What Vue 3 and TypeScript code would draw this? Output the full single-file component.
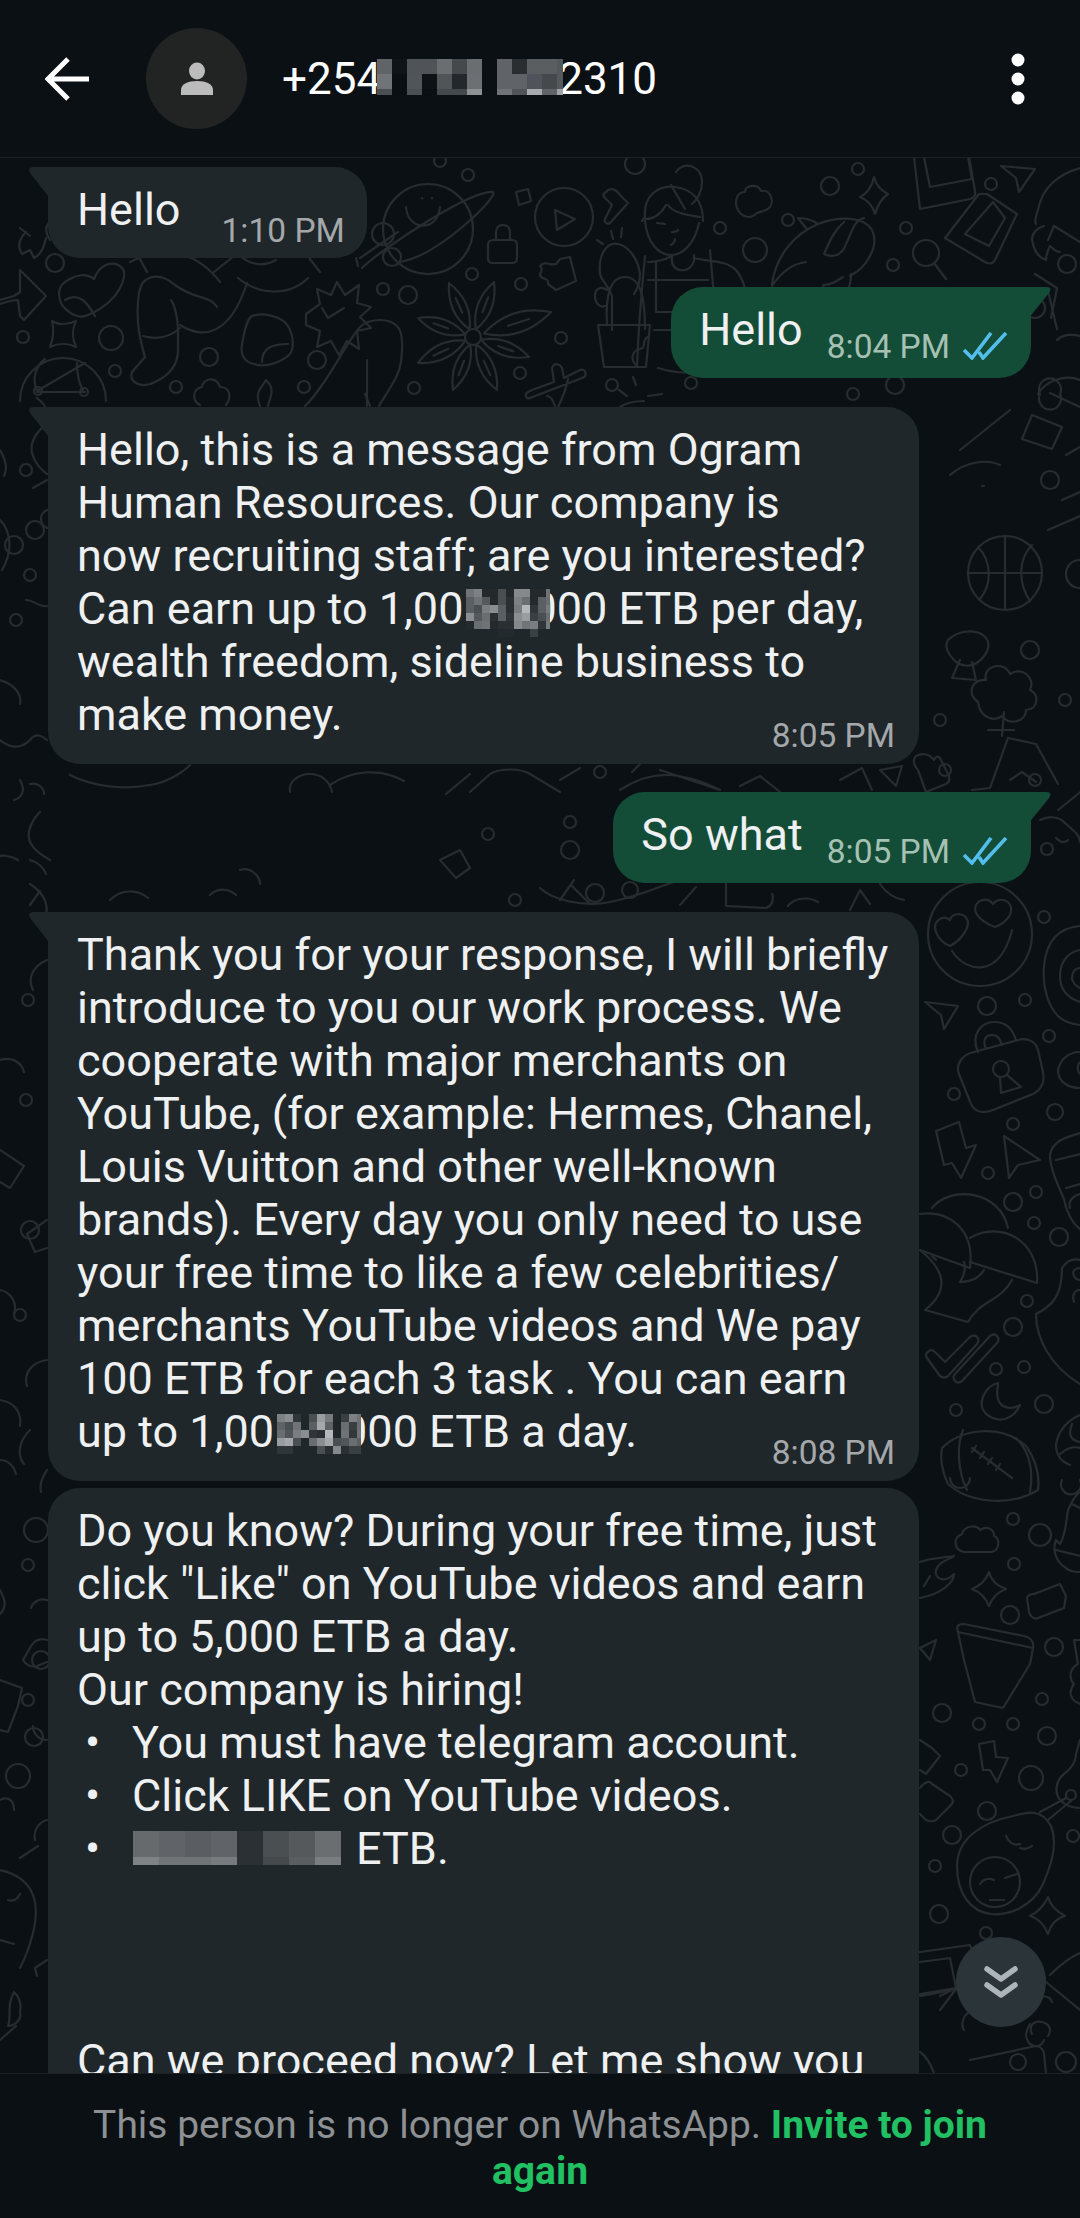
<script setup lang="ts">
interface Mosaic {
  cols: number
  cell: number
  w: number
  h: number
  rise: number
  ml: number
  mr: number
  cells: string[]
}

interface Part {
  text?: string
  mosaic?: Mosaic
}

interface Line {
  parts: Part[]
  bullet?: boolean
}

interface Bubble {
  lines: Line[]
  time: string
}

function cellsOf(rows: string[]): string[] {
  return rows.join(' ').split(' ').map((c) => (c === '-' ? 'transparent' : '#' + c))
}

const titleMosaic: Mosaic = {
  cols: 13,
  cell: 15,
  w: 186,
  h: 36,
  rise: 35,
  ml: -4,
  mr: -5,
  cells: cellsOf([
    '606468 0f1417 505458 505458 6a6e70 45494c 6a6e70 - 606468 2a2e30 5a5e60 5a5e60 55585a',
    '707476 0a0f13 50555a 0d1216 505558 22282b 6c7072 - 606468 606468 50545a 45494c 55585c',
    '4a4f52 0a0f13 4a4f52 0a0f13 44494c 44494c 8f9294 - 707476 505458 a8abad 606468 a0a3a5'
  ])
}

const salaryA: Mosaic = {
  cols: 11,
  cell: 8,
  w: 84,
  h: 48,
  rise: 35,
  ml: 3,
  mr: -19,
  cells: cellsOf([
    '6f7375 7d8183 24292c 24292c 4a4f52 24292c 85898b 85898b 24292c 24292c 6f7375',
    '5a5f62 6f7375 55595c 24292c 4a4f52 2a2f32 7d8183 6a6e70 24292c 5a5f62 6a6e70',
    '5a5f62 4a4f52 7a7e80 8a8e90 5a5f62 2a2f32 777b7d b5b8ba 30353a 5a5f62 777b7d',
    '8a8e90 55595c 6a6e70 2a2f32 5a5f62 30353a 8a8e90 9a9da0 3a3f42 4a4f52 6a6e70',
    '24292c 6a6e70 6f7375 24292c 2a2f32 2a2f32 85898b 707476 7a7e80 30353a 777b7d',
    '- - - - 23292c 23292c - - 3a4044 - -'
  ])
}

const salaryB: Mosaic = {
  cols: 11,
  cell: 8,
  w: 84,
  h: 40,
  rise: 33,
  ml: 3,
  mr: -19,
  cells: cellsOf([
    '7d8183 8a8e90 30353a 1f272a 4a4f52 9a9da0 777b7d 1f272a 3a3f42 7d8183 6f7375',
    '5f6366 4a4f52 6f7375 1f272a 5a5f62 a5a8aa 5f6366 1f272a 6a6e70 3a3f42 6a6e70',
    '6a6e70 50555a 7a7e80 8a8e90 30353a 2a2f32 b5b8ba 1f272a 6f7375 33383b 6f7375',
    '9a9da0 a5a8aa 4a4f52 1f272a 6a6e70 8a8e90 a5a8aa 4a4f52 50555a 6a6e70 5a5f62',
    '30353a 30353a 1f272a 1f272a 1f272a 4a4f52 2a2f32 85898b 2a2f32 3a3f42 3a3f42'
  ])
}

const wageLine: Mosaic = {
  cols: 8,
  cell: 26,
  w: 210,
  h: 34,
  rise: 33,
  ml: 1,
  mr: 13,
  cells: cellsOf([
    '666a6d 606468 5a5e62 606468 2a3033 4a4f52 55595c 6a6e70',
    '7f8385 707476 707476 777b7d 2a3033 45494c 5a5e60 7a7e80'
  ])
}

function plain(text: string): Line {
  return { parts: [{ text }] }
}

const longFirst: Bubble = {
  time: '8:05 PM',
  lines: [
    plain('Hello, this is a message from Ogram'),
    plain('Human Resources. Our company is'),
    plain('now recruiting staff; are you interested?'),
    { parts: [{ text: 'Can earn up to 1,00' }, { mosaic: salaryA }, { text: '000 ETB per day,' }] },
    plain('wealth freedom, sideline business to'),
    plain('make money.')
  ]
}

const longSecond: Bubble = {
  time: '8:08 PM',
  lines: [
    plain('Thank you for your response, I will briefly'),
    plain('introduce to you our work process. We'),
    plain('cooperate with major merchants on'),
    plain('YouTube, (for example: Hermes, Chanel,'),
    plain('Louis Vuitton and other well-known'),
    plain('brands). Every day you only need to use'),
    plain('your free time to like a few celebrities/'),
    plain('merchants YouTube videos and We pay'),
    plain('100 ETB for each 3 task . You can earn'),
    { parts: [{ text: 'up to 1,00' }, { mosaic: salaryB }, { text: '000 ETB a day.' }] }
  ]
}

const thirdLines: Line[] = [
  plain('Do you know? During your free time, just'),
  plain('click "Like" on YouTube videos and earn'),
  plain('up to 5,000 ETB a day.'),
  plain('Our company is hiring!'),
  { parts: [{ text: 'You must have telegram account.' }], bullet: true },
  { parts: [{ text: 'Click LIKE on YouTube videos.' }], bullet: true },
  { parts: [{ mosaic: wageLine }, { text: 'ETB.' }], bullet: true },
  plain('\u00a0'),
  plain('\u00a0'),
  plain('\u00a0'),
  plain('Can we proceed now? Let me show you')
]

function boxOf(m: Mosaic) {
  return { width: `${m.w}px`, marginLeft: `${m.ml}px`, marginRight: `${m.mr}px` }
}

function gridOf(m: Mosaic) {
  return {
    gridTemplateColumns: `repeat(${m.cols}, ${m.cell}px)`,
    gridAutoRows: `${m.cell}px`,
    width: `${m.w}px`,
    height: `${m.h}px`,
    top: `${-m.rise}px`
  }
}

function petal(tx: number, ty: number): string {
  const cx = 473
  const cy = 337
  const dx = tx - cx
  const dy = ty - cy
  const mx = cx + dx * 0.55
  const my = cy + dy * 0.55
  const nx = -dy * 0.24
  const ny = dx * 0.24
  const a = `${cx + dx * 0.14} ${cy + dy * 0.14}`
  const vein = `M${cx + dx * 0.45} ${cy + dy * 0.45} L${cx + dx * 0.72} ${cy + dy * 0.72}`
  return `M${a} Q${mx + nx} ${my + ny} ${tx} ${ty} Q${mx - nx} ${my - ny} ${a} ${vein}`
}

const doodlePaths: string[] = [
  // planet, ringed
  'M406 207 C408 232 438 232 440 207 M362 268 C380 250 470 190 493 192 C500 195 440 255 400 262',
  'M422 198 v.5 M432 198 v.5',
  // play, lock, small shapes
  'M555 210 L575 219 L557 230 Z',
  'M493 240 h19 q5 0 5 5 v13 q0 5 -5 5 h-19 q-5 0 -5 -5 v-13 q0 -5 5 -5 z M496 240 v-7 q0 -8 7 -8 q7 0 7 8 v7',
  'M516 192 l12 -3 l3 12 l-12 4 z',
  'M540 266 c5 -6 10 0 16 -2 l4 -5 l10 -2 l6 24 l-20 9 l-8 -6 c2 -7 -8 -4 -8 -9 c0 -4 4 -5 0 -9 z',
  'M606 192 c4 -5 10 -3 14 3 l8 8 l-18 20 c-3 2 -6 -1 -5 -4 l7 -14 l-8 -8 c-1 -2 0 -4 2 -5 z',
  // woman with plants
  'M671 185 l14 24 M676 172 c8 -12 26 -6 26 10 c0 10 -5 18 -10 22',
  'M645 217 c-2 -22 14 -32 30 -30 c16 2 28 12 28 34 M645 217 l-3 4 M645 221 c2 22 14 34 26 34 c12 0 24 -12 28 -32 M666 205 c-4 8 -12 14 -20 14 M668 205 c5 8 20 10 32 12',
  'M657 223 l8 1 M672 232 c3 0 5 0 6 -2 M671 245 c3 -2 4 -4 4 -6',
  'M672 255 v8 c4 10 18 10 22 -2 v-6 M648 262 c10 0 16 -2 24 -6 M694 258 c16 4 32 2 42 12 c8 10 10 20 12 38',
  'M645 256 c-4 40 -6 60 -8 110 M710 250 l8 95 M656 262 v50 h58 M648 280 l60 0 M654 330 h64 v30 q-20 20 -60 8',
  'M612 330 v-34 c-4 -12 -10 -14 -12 -22 c-2 -22 8 -32 18 -30 c10 2 20 14 22 30 c0 8 -2 14 -6 20 M613 239 l-2 -8 M621 237 l1 -9 M603 244 l-6 -4',
  'M607 325 c-2 -32 4 -48 18 -48 c16 0 20 22 20 52 M607 290 c-6 -4 -12 -2 -12 6 c0 8 6 12 10 10',
  'M598 325 h52 l-4 42 h-42 z M636 365 c-6 -6 -4 -14 4 -16 c8 -2 0 -8 8 -12',
  // cloud, sparkle, fish
  'M741 214 c-8 -8 -6 -22 4 -22 c0 -8 14 -8 16 -1 c10 -2 14 12 8 17 c-4 4 -8 3 -12 5 c-4 4 -10 6 -16 1 z',
  'M874 177 c2 8 8 14 14 17 c-6 4 -10 10 -13 20 c-2 -8 -8 -14 -15 -17 c8 -4 12 -10 14 -20 z',
  'M772 284 c4 -28 22 -50 46 -60 c20 -8 46 -8 54 6 c8 16 -6 38 -22 46 M818 224 c-6 -4 -12 -6 -20 -6 l8 10 M864 218 c-10 2 -12 14 -18 26 c-4 12 -14 14 -22 10 c4 -8 8 -22 20 -32 M772 286 c8 -12 18 -22 34 -24 M843 277 c-6 4 -12 8 -20 8 c2 8 4 14 8 18 M851 274 c0 14 -6 24 -16 30',
  'M914 157 l6 52 l50 -10 c4 -1 6 -4 5 -8 l-6 -34 M924 157 l6 30 l42 -8 l-4 -22',
  'M987 194 l30 20 l-22 46 c-2 4 -6 4 -10 2 l-40 -24 l34 -44 z M965 234 l28 -32 l12 16 l-16 28 z',
  'M913 253 a13 13 0 1 0 26 0 a13 13 0 1 0 -26 0 M934 263 l12 16',
  'M1001 166 l34 3 l-16 23 l-3 -14 z',
  'M1080 168 c-22 6 -38 20 -42 42 c-2 6 -4 10 -2 14 M1044 226 c-8 2 -12 8 -12 14 c2 12 8 18 14 20 c0 -6 2 -10 4 -14 c4 4 8 6 10 6 M1048 240 l6 -14 M1054 226 l26 16',
  // bottom of first band, right column
  'M966 307 l20 -6 l54 -12 c5 -1 8 2 9 6 l8 34 M966 307 l-2 40 M1025 308 a10 10 0 1 0 20 0 a10 10 0 1 0 -20 0',
  'M1035 274 l22 14 l-6 30 M1057 340 c6 -6 14 -6 23 -4',
  'M1080 380 c-14 -6 -34 0 -42 14 M1040 394 a11 11 0 1 0 20 0 a11 11 0 1 0 -20 0 M1080 407 l-30 -14',
  // star, blob, sparkle, left group
  'M306 314 l14 -10 l-3 -15 l14 6 l6 -13 l8 13 l14 -10 l-2 18 l14 4 l-11 10 l11 11 l-14 3 l2 18 l-12 -8 l-8 14 l-8 -14 l-14 6 l3 -16 l-14 -6 z M322 308 l6 10 l16 -10',
  'M252 316 c10 -4 30 0 36 10 c6 10 6 22 2 28 c-8 8 -24 14 -36 10 c-10 -2 -14 -10 -12 -20 c2 -10 4 -24 10 -28 z M262 362 c0 -14 10 -18 26 -18',
  'M52 321 c6 4 16 4 24 0 c-4 8 -4 18 0 26 c-8 -4 -18 -4 -26 0 c4 -10 4 -18 2 -26 z',
  'M20 401 a43 43 0 1 1 86 0 M37 391 l48 -28 M37 391 c-6 -14 0 -26 8 -32 M85 392 l-48 0 M83 391 c-6 -12 -6 -22 -6 -28 M37 398 c4 4 8 6 8 9',
  'M34 391 a4 4 0 1 0 8 0 a4 4 0 1 0 -8 0 M80 392 a4 4 0 1 0 8 0 a4 4 0 1 0 -8 0',
  'M70 279 c-14 6 -12 18 -8 26 c8 10 18 14 26 10 c14 -6 32 -18 36 -38 c2 -10 -8 -16 -18 -12 c-4 2 -8 4 -12 14 c-8 -6 -18 -4 -24 0 z M65 300 c14 -8 22 2 30 16',
  'M0 300 l14 -4 l6 -4 l0 -22 l26 26 l-22 24 l-4 -4 l-2 -16 c-6 0 -12 2 -18 4',
  'M139 293 C135 320 140 340 145 357 L132 372 C128 385 145 388 155 382 C170 375 178 365 178 350 L178 330 C178 320 175 305 171 300 M139 293 C142 274 160 272 175 285 C195 300 210 295 217 307 M143 336 c14 4 26 2 37 -8',
  'M180 325 C204 340 230 335 247 283 M238 278 C260 296 290 296 308 278',
  'M135 250 l12 22 M100 230 c10 -6 30 -4 50 6 M50 240 c-8 -12 -2 -20 8 -22 M26 232 c-8 8 -8 16 -4 22 l8 -4 l4 8 c8 -4 10 -12 12 -20 M20 228 l10 8 M130 262 c40 -20 70 -6 90 20',
  'M238 254 c10 10 24 14 38 6 M306 254 l14 18 M214 272 l20 -16 M360 258 l38 -26 M358 266 l-2 -8',
  'M372 234 a11 11 0 1 0 22 0 a11 11 0 1 0 -22 0',
  // whale tail
  'M305 406 c24 -24 42 -66 56 -80 c10 -8 28 -8 36 0 c6 6 6 20 4 36 c-2 14 -10 24 -22 44 M367 360 v46 M365 394 l5 12 M268 406 c2 -10 8 -16 -2 -26 c-4 8 -12 10 -6 26',
  'M200 405 c-8 -4 -8 -16 2 -18 c0 -8 14 -12 18 0 c10 0 12 10 6 18',
  // cross and sunbeams
  'M532 390 l22 -8 l-2 -14 c2 -6 8 -4 10 0 l2 10 l16 -8 c6 -2 8 6 2 8 l-52 20 c-4 2 -6 -4 -2 -6 z M568 379 c-2 10 -6 20 -10 28 M555 406 c-2 -6 -4 -10 -8 -10',
  'M636 385 l-3 -8 M627 396 l-8 -6 M648 396 l14 -2 M620 407 c6 -4 14 -6 24 -6',
  // second-level gaps and right column, upper part
  'M1000 465 c-12 -6 -34 -4 -50 10 M984 486 l-2 0 M960 450 l50 -40 M1032 415 l30 12 l-10 22 l-30 -10 z M1066 455 l14 -8',
  'M968 573 a37 37 0 1 0 74 0 a37 37 0 1 0 -74 0 M978 547 c14 14 14 38 2 52 M1032 545 c-14 14 -14 38 -2 56 M968 573 h74 M1005 536 v74',
  'M1062 500 l18 -8 M1048 530 l32 -14 M1080 560 c-8 0 -14 6 -14 14 c0 8 6 14 14 14',
  'M948 640 c10 -10 30 -12 38 -2 c6 8 0 18 -8 24 c-8 6 -18 4 -24 -2 c-6 -6 -10 -14 -6 -20 z M960 660 l-8 18 l24 2 l-4 -18',
  'M978 702 c-12 -8 -6 -24 8 -22 c-4 -14 18 -20 24 -6 c12 -8 26 4 20 16 c10 4 8 20 -4 20 c0 12 -18 16 -24 6 c-8 6 -22 2 -24 -14 z M1004 712 l-2 24 M1014 730 l-26 0',
  'M1008 738 l-18 50 l-18 2 M1008 738 l28 6 l22 40 M1010 780 l12 -8 l14 10',
  'M934 760 c-6 -8 -14 -6 -18 -4 c-4 4 -2 10 2 14 l8 22 l20 -8 c4 -2 4 -6 2 -10 l-8 -16 c-2 -2 -4 -2 -6 2 z',
  'M880 770 l22 -4 l-6 20 z',
  'M1058 810 l30 -24 M1040 820 c8 -4 18 -4 24 2 c8 8 16 12 16 20 M1056 838 c4 4 8 6 12 2',
  'M632 772 l8 -8 M620 790 c30 -20 60 -20 100 0 M660 770 l60 20 M740 786 l20 -10 l20 16 M840 780 l22 -12 l10 22',
  'M560 792 l-30 -18 c-10 -6 -30 -6 -40 0 l-20 18 M560 780 l20 -12 M470 774 l-24 20',
  'M540 888 c10 10 40 20 70 14 c30 -6 50 -16 64 -20 M726 884 v22 l40 2 c6 -2 8 -8 6 -14',
  'M788 906 c6 -8 20 -10 30 -4 M880 884 c4 6 12 14 24 16 M70 775 c20 10 50 16 80 10 c14 -2 30 -10 40 -20 M330 785 c20 -14 50 -18 74 -4',
  'M290 792 c-2 -10 8 -18 20 -18 c12 0 20 8 22 18 M440 860 l20 -10 l10 18 l-14 10 z',
  'M240 870 c10 -4 20 6 20 14 M40 812 c-8 8 -14 20 -10 30 c4 8 10 12 20 18 M18 860 c-10 -6 -18 -4 -18 -4 M30 884 c16 10 20 24 14 36 M30 784 c8 -2 14 4 14 10',
  // right column, heart smiley onward
  'M928 934 a52 52 0 1 0 104 0 a52 52 0 1 0 -104 0',
  'M952 951 c14 22 48 28 60 -21',
  'M936 932 c-4 -10 6 -18 14 -12 c2 -8 16 -8 18 2 c0 10 -10 20 -18 24 c-6 -2 -12 -8 -14 -14 z',
  'M975 910 c0 -10 12 -14 18 -6 c6 -8 20 -4 18 8 c-2 8 -12 14 -16 15 c-6 -2 -18 -8 -20 -17 z',
  'M925 1002 l33 4 l-14 23 l-3 -14 z',
  'M1080 926 c-24 2 -34 18 -36 40 c-2 20 4 40 14 50 c6 6 14 8 22 9 M1080 950 c-12 2 -20 12 -20 26 c0 14 8 22 20 26 M1080 968 c-6 0 -8 6 -8 10 c0 4 4 8 8 10',
  'M974 1052 l44 -12 c10 -3 18 2 20 10 l5 22 c2 10 -2 18 -10 22 l-40 16 c-10 4 -18 2 -22 -6 l-12 -30 c-4 -10 4 -20 15 -22 z',
  'M978 1052 c-8 -18 4 -30 16 -30 c12 0 18 6 22 18 M986 1049 c-4 -10 0 -14 6 -14 c6 0 8 4 10 10',
  'M993 1069 a8 8 0 1 0 16 0 a8 8 0 1 0 -16 0 M1000 1077 l1 16 l20 -6 l-14 -12',
  'M1080 1052 c-12 0 -20 8 -22 18 c0 12 10 18 22 18 M1080 1062 c-4 4 -2 10 0 12',
  'M936 1131 l23 -9 l7 26 l10 -3 l-15 33 l-9 -15 l-8 2 z',
  'M1004 1136 l36 24 l-22 5 l-9 13 z',
  'M1080 1133 c-14 4 -28 8 -30 22 c0 14 8 30 14 44 c2 12 8 24 16 30 M1056 1160 l24 -6 M1066 1188 l14 -4 M1080 1194 c-8 2 -12 8 -10 14',
  'M920 1214 C950 1210 975 1230 970 1268 L920 1250',
  'M970 1238 C1000 1220 1040 1240 1037 1283 L970 1262',
  'M932 1208 C950 1185 1000 1190 1008 1228',
  'M920 1250 C945 1270 950 1290 925 1310 L968 1322 C980 1300 1000 1302 1012 1280 M964 1262 c2 8 0 14 -4 20 c8 0 18 -2 24 -12 M932 1256 l4 4',
  'M1080 1260 c-8 -2 -14 2 -18 8 c0 12 -2 24 -8 32 c-6 8 -14 12 -18 14 c0 24 14 52 44 70 M1080 1268 c-6 0 -8 4 -6 8 c2 4 4 4 6 4 M1080 1290 c-6 0 -8 6 -6 12',
  'M927 1358 q-3 -4 2 -7 q3 -2 6 1 l10 10 l25 -25 q4 -3 7 0 q3 3 0 7 l-29 32 q-4 3 -8 0 z',
  'M955 1374 l35 -38 q4 -3 7 0 q3 4 0 7 l-35 38 q-4 3 -7 0 q-3 -4 0 -7 z',
  'M998 1383 c-10 2 -18 14 -16 24 c4 14 28 20 38 -2 c-10 6 -20 2 -22 -6 c-2 -6 0 -12 0 -16 z',
  'M942 1448 c20 -20 60 -24 84 -2 c10 14 14 28 12 44 c-30 18 -70 12 -90 -6 c-6 -12 -8 -26 -6 -36 z M963 1430 c-6 14 -6 40 4 60 M1016 1438 c12 12 18 30 14 54 M972 1448 l40 30 M976 1446 l-4 6 M984 1452 l-4 6 M992 1458 l-4 6 M1000 1464 l-4 6',
  'M1080 1415 c-10 4 -22 14 -24 30 c0 10 4 16 14 20 M1060 1454 c6 -6 14 -8 20 -6 M1072 1424 c-4 10 -2 16 8 18',
  'M950 1478 a10 10 0 1 0 20 0',
  'M1062 1480 a10 10 0 1 0 18 0',
  // below the football
  'M964 1552 c-10 -2 -12 -14 -2 -18 c2 -8 14 -10 18 -4 c6 -4 14 -2 14 6 c6 2 6 14 -2 16 z',
  'M989 1572 c2 8 8 14 17 17 c-8 3 -14 9 -17 17 c-3 -8 -9 -14 -17 -17 c8 -3 14 -9 17 -17 z',
  'M1034 1594 l26 -10 l6 12 l-2 12 l-26 10 c-4 2 -8 -2 -9 -6 l-2 -14 c0 -2 2 -3 5 -4 z',
  'M958 1632 L1033 1648 L1030 1664 L1003 1708 L975 1702 L964 1660 Z M958 1632 c-2 -6 0 -8 6 -8 l60 12 c8 2 10 6 9 12',
  'M979 1744 l15 -3 l2 16 l12 1 l-11 24 l-7 -12 l-7 0 z',
  'M957 1866 c0 -28 26 -44 56 -50 c14 -4 28 -8 38 10 c8 20 -2 44 -8 58 c-10 22 -34 32 -52 30 c-20 -2 -34 -20 -34 -48 z',
  'M970 1882 a25 25 0 1 0 50 0 a25 25 0 1 0 -50 0 M980 1884 c4 -6 10 -6 14 -4 M990 1900 l14 0 M1005 1878 l12 -4 M1006 1836 c4 8 8 10 14 8 M1020 1848 c6 2 8 0 12 -2',
  'M1048 1820 l24 -20 M1040 1812 l26 -14 M1066 1795 a5 5 0 1 0 10 0 a5 5 0 1 0 -10 0',
  'M1048 1897 c2 8 8 14 17 19 c-8 2 -14 8 -17 18 c-4 -10 -10 -16 -18 -18 c8 -4 14 -10 18 -19 z',
  'M920 1562 c10 -4 22 -4 34 -6 c-6 4 -16 6 -18 14 c-2 8 8 14 18 4 c0 8 -12 20 -34 24 M924 1586 l6 -10 M920 1648 l16 -8 l-6 20 z',
  'M1080 1492 c-6 4 -8 10 -12 18 c-2 12 -2 24 -8 34 c-2 -2 -4 -4 -4 -4 c-4 10 0 22 10 28 c4 4 10 4 14 4 M1056 1550 l24 6 M1072 1504 l8 4',
  'M1080 1640 l-6 0 l4 24 c-8 4 -10 14 -4 20 c-6 8 -4 16 6 20',
  'M1080 1740 l-4 14 c0 8 -4 14 -12 20 c-8 6 -10 18 -4 26 c6 6 12 8 20 8',
  'M920 1740 l12 8 l8 8 l-14 18 l-6 -4 M920 1788 c4 -6 10 -8 12 -4 l18 12 c4 4 4 6 0 10 l-14 14 c-4 2 -6 2 -10 0 l-6 -6',
  'M920 1952 l50 -7 l5 15 l-6 28 c-20 2 -36 6 -49 8 M920 1962 l30 -4 l6 30 l-36 6 M940 1996 l30 -15 M940 2010 l26 -34',
  'M1032 2000 c8 -4 18 -6 20 2 M1046 1982 l34 28 M1050 1975 c10 -10 20 -18 30 -22 M1032 2034 c-4 -8 2 -14 10 -12 c8 2 10 8 6 14 M1030 2024 c-4 6 -6 14 0 20 c6 4 12 2 14 -4',
  'M964 2030 c-4 -6 0 -16 6 -18 M970 2060 l66 -14 c4 0 8 4 8 8 l2 19 M1010 2062 a8 8 0 1 0 16 0 a8 8 0 1 0 -16 0',
  'M1056 2062 a10 10 0 1 0 20 0 a10 10 0 1 0 -20 0 M920 2052 c6 4 10 10 14 21',
  // left column
  'M47 424 c-14 10 -18 22 -14 32 c2 6 6 12 14 18 M0 450 c6 10 8 18 4 26',
  'M0 520 c10 10 14 30 2 50 M47 480 l-14 8 M47 510 c-8 4 -8 14 0 18 M26 600 c8 0 14 8 21 6 M0 680 c14 4 22 14 20 24',
  'M0 740 c10 8 20 10 30 0 c6 -8 12 -4 17 0 M20 780 c6 10 2 18 -6 20 M30 860 c8 2 14 8 16 14 M47 960 c-14 6 -20 18 -14 30 M0 1060 c14 -4 22 4 24 12',
  'M0 1150 l24 16 l-14 22 l-10 -6 M47 1220 l-20 14 l8 18 l12 -4 M0 1290 c10 2 18 12 14 24 M47 1360 c-14 2 -24 12 -20 26 M0 1400 c14 2 22 12 20 26',
  'M30 1430 c-10 10 -14 24 -6 34 M0 1460 c8 0 14 6 16 14 M47 1470 c-4 6 -8 14 -6 22',
  'M0 1590 c4 8 8 16 0 24 M47 1600 c-8 -2 -14 2 -16 8 M47 1640 c-6 -2 -12 0 -16 6 l-8 14 c2 4 8 8 14 6 l10 -4',
  'M0 1680 l22 8 l-4 18 l-10 26 l-8 -2 M47 1740 c-8 0 -14 -6 -14 -14',
  'M0 1800 c8 -4 14 0 14 10 M47 1820 c-8 2 -14 10 -12 20 M0 1870 c18 4 30 14 34 28 c6 20 -4 50 -14 70 M20 1858 l18 -12 M8 1900 c6 2 10 -2 12 -6 M0 1940 l14 4',
  'M14 1992 c4 4 8 10 6 20 c2 8 -6 14 -12 14 c4 -10 -2 -20 6 -34 M0 2040 l16 -14 M47 1960 l-12 8 l2 8',
  // left of outgoing bubbles, second gap
  'M560 900 l14 -20 M572 886 l18 18 M110 900 c10 -10 26 -12 38 -2 M30 905 l10 -14 M210 895 c8 -8 20 -6 26 0 M680 905 l16 -18 M850 910 l10 -20 l10 14'
]

const flower: string[] = [
  [449, 283],
  [494, 282],
  [551, 312],
  [529, 357],
  [497, 390],
  [453, 390],
  [418, 363],
  [418, 318]
].map(([x, y]) => petal(x, y))

const dots: number[][] = [
  [428, 229, 45], [564, 217, 29], [392, 257, 9],
  [440, 161, 6], [468, 175, 6], [635, 164, 10], [858, 169, 6], [830, 186, 9], [788, 220, 6], [720, 228, 6],
  [755, 250, 12], [906, 228, 6], [893, 265, 6], [991, 184, 6], [1067, 264, 9], [472, 274, 6], [383, 289, 6],
  [408, 295, 9], [521, 284, 6], [520, 373, 6], [561, 338, 6], [414, 388, 6], [612, 385, 6], [691, 383, 6],
  [853, 394, 6], [895, 385, 9], [55, 263, 9], [23, 337, 6], [111, 338, 12], [115, 371, 6], [176, 387, 6],
  [209, 357, 9], [317, 360, 9], [304, 387, 6], [473, 337, 8],
  [987, 1006, 9], [1025, 1000, 6], [1044, 917, 6], [954, 1094, 6], [1049, 1036, 6], [1013, 1124, 6], [1055, 1112, 8],
  [988, 1173, 6], [1013, 1202, 9], [1036, 1192, 6], [1034, 1223, 6], [1059, 1237, 9], [996, 1369, 6], [1024, 1367, 6],
  [1013, 1327, 9], [1027, 1301, 6], [1044, 1404, 9], [956, 1410, 6], [1013, 1519, 6], [1040, 1535, 11], [1014, 1564, 6],
  [1010, 1615, 9], [1054, 1647, 9], [1042, 1699, 6], [1013, 1724, 6], [979, 1724, 6], [1047, 1736, 9], [1031, 1778, 12],
  [961, 1770, 6], [942, 1713, 9], [987, 1811, 9], [952, 1835, 9], [935, 1866, 6], [939, 1914, 9], [986, 1933, 6], [1073, 1836, 6],
  [940, 720, 6], [1065, 700, 6], [1030, 650, 9], [1050, 480, 9], [945, 770, 6], [1004, 822, 6], [1035, 780, 6], [1047, 849, 6],
  [570, 850, 9], [570, 822, 6], [488, 834, 6], [515, 900, 6], [595, 893, 9], [630, 890, 8], [600, 772, 6], [910, 800, 6],
  [26, 470, 6], [35, 530, 9], [14, 545, 9], [30, 575, 6], [16, 620, 6],
  [36, 1530, 12], [28, 1565, 6], [41, 1660, 9], [28, 1700, 6], [34, 1737, 9], [18, 1776, 12], [26, 1100, 6], [30, 1230, 9], [20, 1315, 6], [28, 1000, 6]
]
</script>

<template>
  <div class="phone">
    <header class="topbar">
      <svg class="back" viewBox="0 0 46 44" width="46" height="44">
        <path d="M44 22H5M23 2 3 22l20 20" fill="none" stroke="#fff" stroke-width="5" />
      </svg>
      <div class="avatar">
        <svg viewBox="0 0 34 34" width="34" height="34">
          <ellipse cx="17" cy="9" rx="8" ry="8.5" fill="#bcbcbc" />
          <path d="M1 33v-5c0-6 7-9 16-9s16 3 16 9v5z" fill="#bcbcbc" />
        </svg>
      </div>
      <div class="title">+254<span class="mosaic" :style="boxOf(titleMosaic)"><span class="cells" :style="gridOf(titleMosaic)"><i v-for="(c, i) in titleMosaic.cells" :key="i" :style="{ background: c }" /></span></span>2310</div>
      <svg class="menu" viewBox="0 0 16 54" width="16" height="54">
        <circle cx="8" cy="8" r="6.5" fill="#fff" />
        <circle cx="8" cy="27" r="6.5" fill="#fff" />
        <circle cx="8" cy="46" r="6.5" fill="#fff" />
      </svg>
    </header>

    <main class="chat">
      <svg class="wallpaper" viewBox="0 158 1080 1915" width="1080" height="1915" fill="none" stroke="#272c2f" stroke-width="2.2" stroke-linecap="round" stroke-linejoin="round">
        <circle v-for="(d, i) in dots" :key="'d' + i" :cx="d[0]" :cy="d[1]" :r="d[2]" />
        <path v-for="(p, i) in doodlePaths" :key="'p' + i" :d="p" />
        <path v-for="(p, i) in flower" :key="'f' + i" :d="p" />
      </svg>

      <div class="thread">
        <div class="bubble in short first">
          <svg class="tail tail-in" viewBox="0 0 24 34" width="24" height="34"><path d="M24 0H6Q-1 0 2 6L24 34Z" fill="#1f272a" /></svg>
          <span class="line">Hello</span>
          <span class="time">1:10 PM</span>
        </div>

        <div class="bubble out short hello">
          <svg class="tail tail-out" viewBox="0 0 24 32" width="24" height="32"><path d="M0 0H18Q25 0 21 6L0 32Z" fill="#144d37" /></svg>
          <span class="line">Hello</span>
          <span class="time">8:04 PM</span>
          <svg class="ticks" viewBox="0 0 46 28" width="46" height="28"><path d="M2 18l8 8L29 1M17 20l4 6L44 1" fill="none" stroke="#53bdeb" stroke-width="3.6" /></svg>
        </div>

        <div class="bubble in long">
          <svg class="tail tail-in" viewBox="0 0 24 34" width="24" height="34"><path d="M24 0H6Q-1 0 2 6L24 34Z" fill="#1f272a" /></svg>
          <div v-for="(l, i) in longFirst.lines" :key="i" class="line">
            <template v-for="(part, j) in l.parts" :key="j">
              <span v-if="part.mosaic" class="mosaic" :style="boxOf(part.mosaic)"><span class="cells" :style="gridOf(part.mosaic)"><i v-for="(c, k) in part.mosaic.cells" :key="k" :style="{ background: c }" /></span></span>
              <template v-else>{{ part.text }}</template>
            </template>
          </div>
          <div class="time">{{ longFirst.time }}</div>
        </div>

        <div class="bubble out short sowhat">
          <svg class="tail tail-out" viewBox="0 0 24 32" width="24" height="32"><path d="M0 0H18Q25 0 21 6L0 32Z" fill="#144d37" /></svg>
          <span class="line">So what</span>
          <span class="time">8:05 PM</span>
          <svg class="ticks" viewBox="0 0 46 28" width="46" height="28"><path d="M2 18l8 8L29 1M17 20l4 6L44 1" fill="none" stroke="#53bdeb" stroke-width="3.6" /></svg>
        </div>

        <div class="bubble in long">
          <svg class="tail tail-in" viewBox="0 0 24 34" width="24" height="34"><path d="M24 0H6Q-1 0 2 6L24 34Z" fill="#1f272a" /></svg>
          <div v-for="(l, i) in longSecond.lines" :key="i" class="line">
            <template v-for="(part, j) in l.parts" :key="j">
              <span v-if="part.mosaic" class="mosaic" :style="boxOf(part.mosaic)"><span class="cells" :style="gridOf(part.mosaic)"><i v-for="(c, k) in part.mosaic.cells" :key="k" :style="{ background: c }" /></span></span>
              <template v-else>{{ part.text }}</template>
            </template>
          </div>
          <div class="time">{{ longSecond.time }}</div>
        </div>

        <div class="bubble in long last">
          <div v-for="(l, i) in thirdLines" :key="i" class="line">
            <span v-if="l.bullet" class="dot">•</span>
            <template v-for="(part, j) in l.parts" :key="j">
              <span v-if="part.mosaic" class="mosaic" :style="boxOf(part.mosaic)"><span class="cells" :style="gridOf(part.mosaic)"><i v-for="(c, k) in part.mosaic.cells" :key="k" :style="{ background: c }" /></span></span>
              <template v-else>{{ part.text }}</template>
            </template>
          </div>
        </div>
      </div>

      <div class="jump">
        <svg viewBox="0 0 36 36" width="36" height="36">
          <path d="M4 5l14 10L32 5M4 21l14 10 14-10" fill="none" stroke="#aeb5b8" stroke-width="5.5" stroke-linecap="round" stroke-linejoin="round" />
        </svg>
      </div>
    </main>

    <footer class="notice">
      This person is no longer on WhatsApp. <b>Invite to join again</b>
    </footer>
  </div>
</template>

<style scoped>
.phone {
  width: 1080px;
  height: 2218px;
  display: flex;
  flex-direction: column;
  overflow: hidden;
  background: #0b1014;
  font-family: Roboto, "Noto Sans", sans-serif;
  color: #eef0f1;
}

.topbar {
  height: 157px;
  flex: none;
  display: flex;
  align-items: center;
  padding: 0 54px 0 45px;
  border-bottom: 1px solid #1d2124;
  box-sizing: content-box;
  background: #0b1014;
}

.back {
  flex: none;
}

.avatar {
  flex: none;
  width: 101px;
  height: 101px;
  margin-left: 55px;
  border-radius: 50%;
  background: #222423;
  display: flex;
  align-items: center;
  justify-content: center;
}

.title {
  flex: 1;
  margin-left: 35px;
  font-size: 44px;
  line-height: 60px;
  color: #fff;
  white-space: nowrap;
}

.menu {
  flex: none;
}

.mosaic {
  display: inline-block;
  position: relative;
  z-index: 1;
  height: 0;
}

.cells {
  position: absolute;
  left: 0;
  display: grid;
  overflow: hidden;
}

.cells i {
  display: block;
}

.chat {
  position: relative;
  flex: 1;
  min-height: 0;
  overflow: hidden;
}

.wallpaper {
  position: absolute;
  top: 0;
  left: 0;
}

.thread {
  position: relative;
  display: flex;
  flex-direction: column;
  padding-top: 9px;
}

.bubble {
  position: relative;
  font-size: 45px;
  line-height: 53px;
  box-sizing: border-box;
  border-radius: 32px;
}

.bubble.in {
  background: #1f272a;
  margin-left: 48px;
}

.bubble.in:has(.tail) {
  border-top-left-radius: 0;
}

.bubble.out {
  background: #144d37;
  align-self: flex-end;
  margin-right: 49px;
  border-top-right-radius: 0;
}

.line {
  display: block;
  white-space: nowrap;
}

.short {
  display: flex;
  align-items: flex-start;
  height: 91px;
  padding-top: 16px;
}

.first {
  width: 319px;
  padding-left: 29px;
  gap: 41px;
}

.first .time {
  margin-top: 31px;
  color: #a4a8aa;
}

.hello,
.sowhat {
  margin-top: 29px;
  padding-left: 28px;
  gap: 24px;
}

.sowhat {
  margin-top: 28px;
}

.out .time {
  margin-top: 27px;
  color: #a5c1b4;
}

.ticks {
  flex: none;
  margin: 29px 23px 0 -12px;
}

.time {
  font-size: 33.5px;
  line-height: 34px;
  white-space: nowrap;
  color: #a4a8aa;
}

.long {
  width: 871px;
  margin-top: 29px;
  padding: 16px 24px 11px 29px;
}

.long .time {
  margin-top: -22px;
  text-align: right;
}

.last {
  margin-top: 7px;
  height: 640px;
  flex: none;
}

.dot {
  display: inline-block;
  width: 55px;
  padding-left: 8px;
  box-sizing: border-box;
}

.jump {
  position: absolute;
  right: 34px;
  bottom: 46px;
  width: 90px;
  height: 90px;
  border-radius: 50%;
  background: #2a3439;
  display: flex;
  align-items: center;
  justify-content: center;
}

.tail {
  position: absolute;
  top: 0;
}

.tail-in {
  left: -20px;
}

.tail-out {
  right: -21px;
}

.notice {
  flex: none;
  height: 145px;
  box-sizing: border-box;
  border-top: 1px solid #1d2124;
  padding: 28px 90px 0;
  background: #0b1014;
  text-align: center;
  font-size: 39px;
  line-height: 46px;
  color: #8d9194;
}

.notice b {
  color: #21c063;
  font-weight: 700;
}
</style>
